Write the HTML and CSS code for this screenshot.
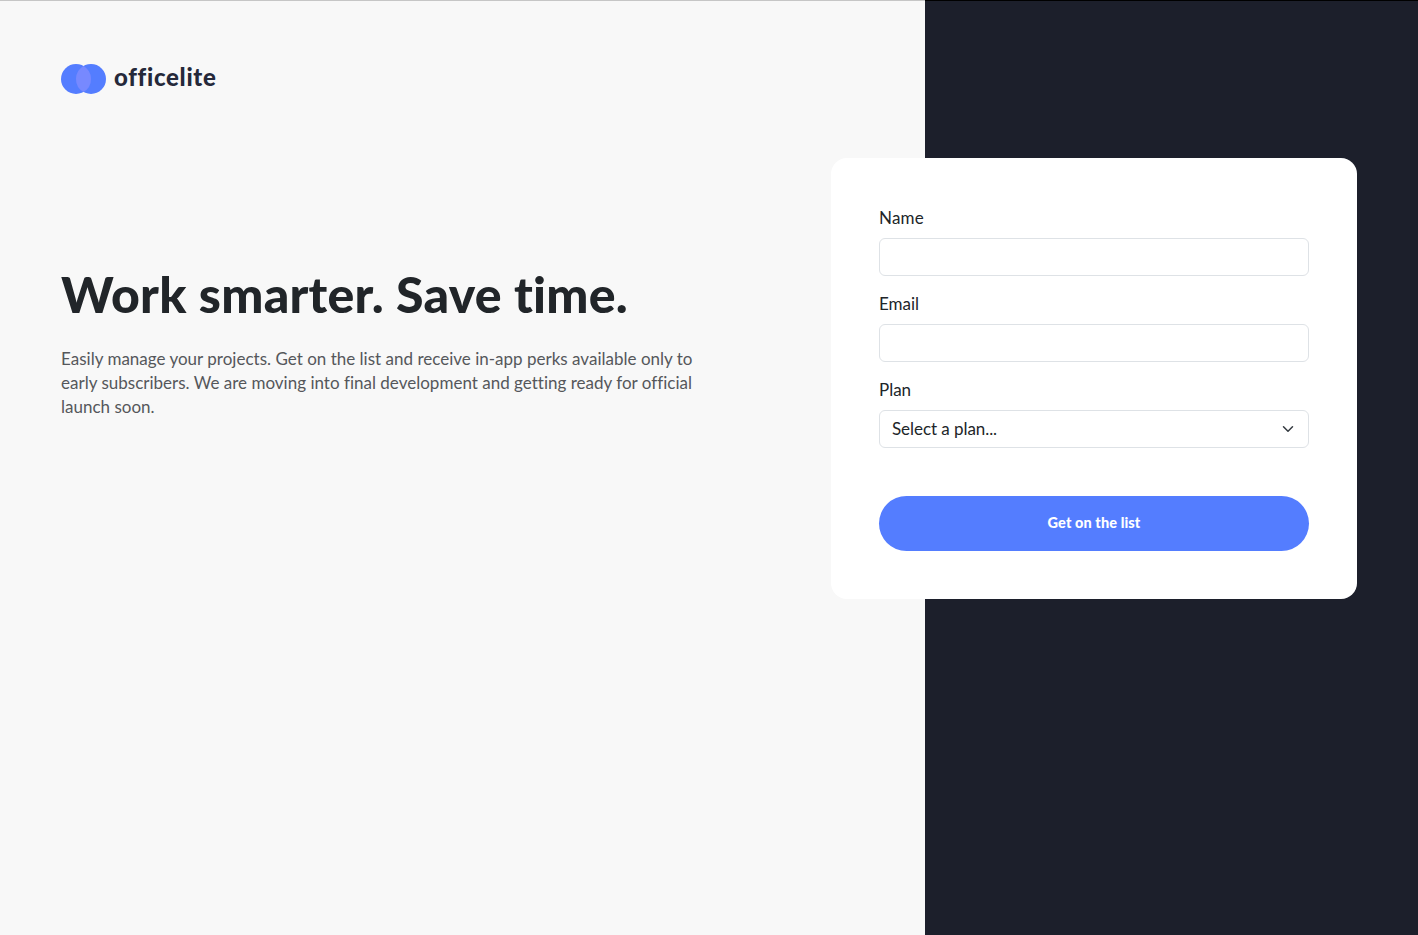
FILE: index.html
```html
<!DOCTYPE html>
<html lang="en">
<head>
<meta charset="utf-8">
<title>officelite</title>
<link rel="stylesheet" href="styles.css">
</head>
<body>
<div class="page">
  <header class="header">
    <a class="brand">
      <svg class="brand-mark" width="45" height="30" viewBox="0 0 45 30" aria-hidden="true">
        <circle cx="15" cy="15" r="15" fill="#547dff"/>
        <circle cx="30" cy="15" r="15" fill="#547dff"/>
        <path d="M22.5 2a15 15 0 0 1 0 26a15 15 0 0 1 0-26z" fill="#7789ff"/>
      </svg>
      <span class="brand-name">officelite</span>
    </a>
  </header>
  <main class="main">
    <section class="intro">
      <h1 class="title">Work smarter. Save time.</h1>
      <p class="lead"><span class="line">Easily manage your projects. Get on the list and receive in-app perks available only to</span> <span class="line">early subscribers. We are moving into final development and getting ready for official</span> <span class="line">launch soon.</span></p>
    </section>
    <form class="card">
      <div class="field">
        <label class="label label-name" for="name">Name</label>
        <input class="control" id="name" type="text">
      </div>
      <div class="field">
        <label class="label" for="email">Email</label>
        <input class="control" id="email" type="email">
      </div>
      <div class="field">
        <span class="label">Plan</span>
        <div class="control select">
          <span class="select-value">Select a plan...</span>
          <svg width="16" height="12" viewBox="0 0 16 16" fill="none" stroke="#343a40" stroke-width="2" stroke-linecap="round" stroke-linejoin="round" aria-hidden="true"><path d="m2 5 6 6 6-6"/></svg>
        </div>
      </div>
      <button class="submit" type="button">Get on the list</button>
    </form>
  </main>
</div>
</body>
</html>
```
FILE: styles.css
```css
* { box-sizing: border-box; }
body {
  margin: 0;
  font-family: Lato, sans-serif;
  font-size: 17px;
  line-height: 24px;
  color: #212529;
}
.page {
  height: 935px;
  padding: 64px 61px 0;
  background:
    linear-gradient(to right, #c6c6c6 925px, #000 925px) top / 100% 1px no-repeat,
    linear-gradient(to right, #f8f8f8 925px, #1c1f2b 925px);
  overflow: hidden;
}
.header { height: 94px; }
.brand {
  display: flex;
  gap: 8px;
  height: 30px;
}
.brand-mark { flex: none; }
.brand-name {
  font-size: 24px;
  font-weight: 900;
  line-height: 26px;
  letter-spacing: 0.7px;
  color: #25293a;
}
.main {
  display: flex;
  justify-content: space-between;
  align-items: flex-start;
}
.intro {
  width: 660px;
  padding-top: 107px;
}
.title {
  margin: 0;
  font-size: 50px;
  font-weight: 900;
  line-height: 58px;
  letter-spacing: 0.25px;
  white-space: nowrap;
}
.lead {
  margin: 24px 0 0;
  color: #55575b;
}
.line {
  display: block;
  width: max-content;
  letter-spacing: 0.01px;
  white-space: nowrap;
}
.card {
  width: 526px;
  height: 441px;
  padding: 48px;
  border-radius: 16px;
  background: #fff;
}
.field { margin-bottom: 16px; }
.label {
  display: block;
  width: max-content;
  margin-bottom: 8px;
}
.label-name { letter-spacing: 0.2px; }
.control {
  display: block;
  width: 100%;
  height: 38px;
  padding: 0 12px;
  border: 1px solid #dee2e6;
  border-radius: 6px;
  background: #fff;
}
.select {
  display: flex;
  align-items: center;
  justify-content: space-between;
}
.select-value { letter-spacing: -0.06px; }
.submit {
  display: block;
  width: 100%;
  height: 55px;
  margin-top: 48px;
  padding: 0 0 2px;
  border: 0;
  border-radius: 28px;
  background: #547dff;
  color: #fff;
  font: 900 14.5px/20px Lato, sans-serif;
  letter-spacing: 0.1px;
}
```
